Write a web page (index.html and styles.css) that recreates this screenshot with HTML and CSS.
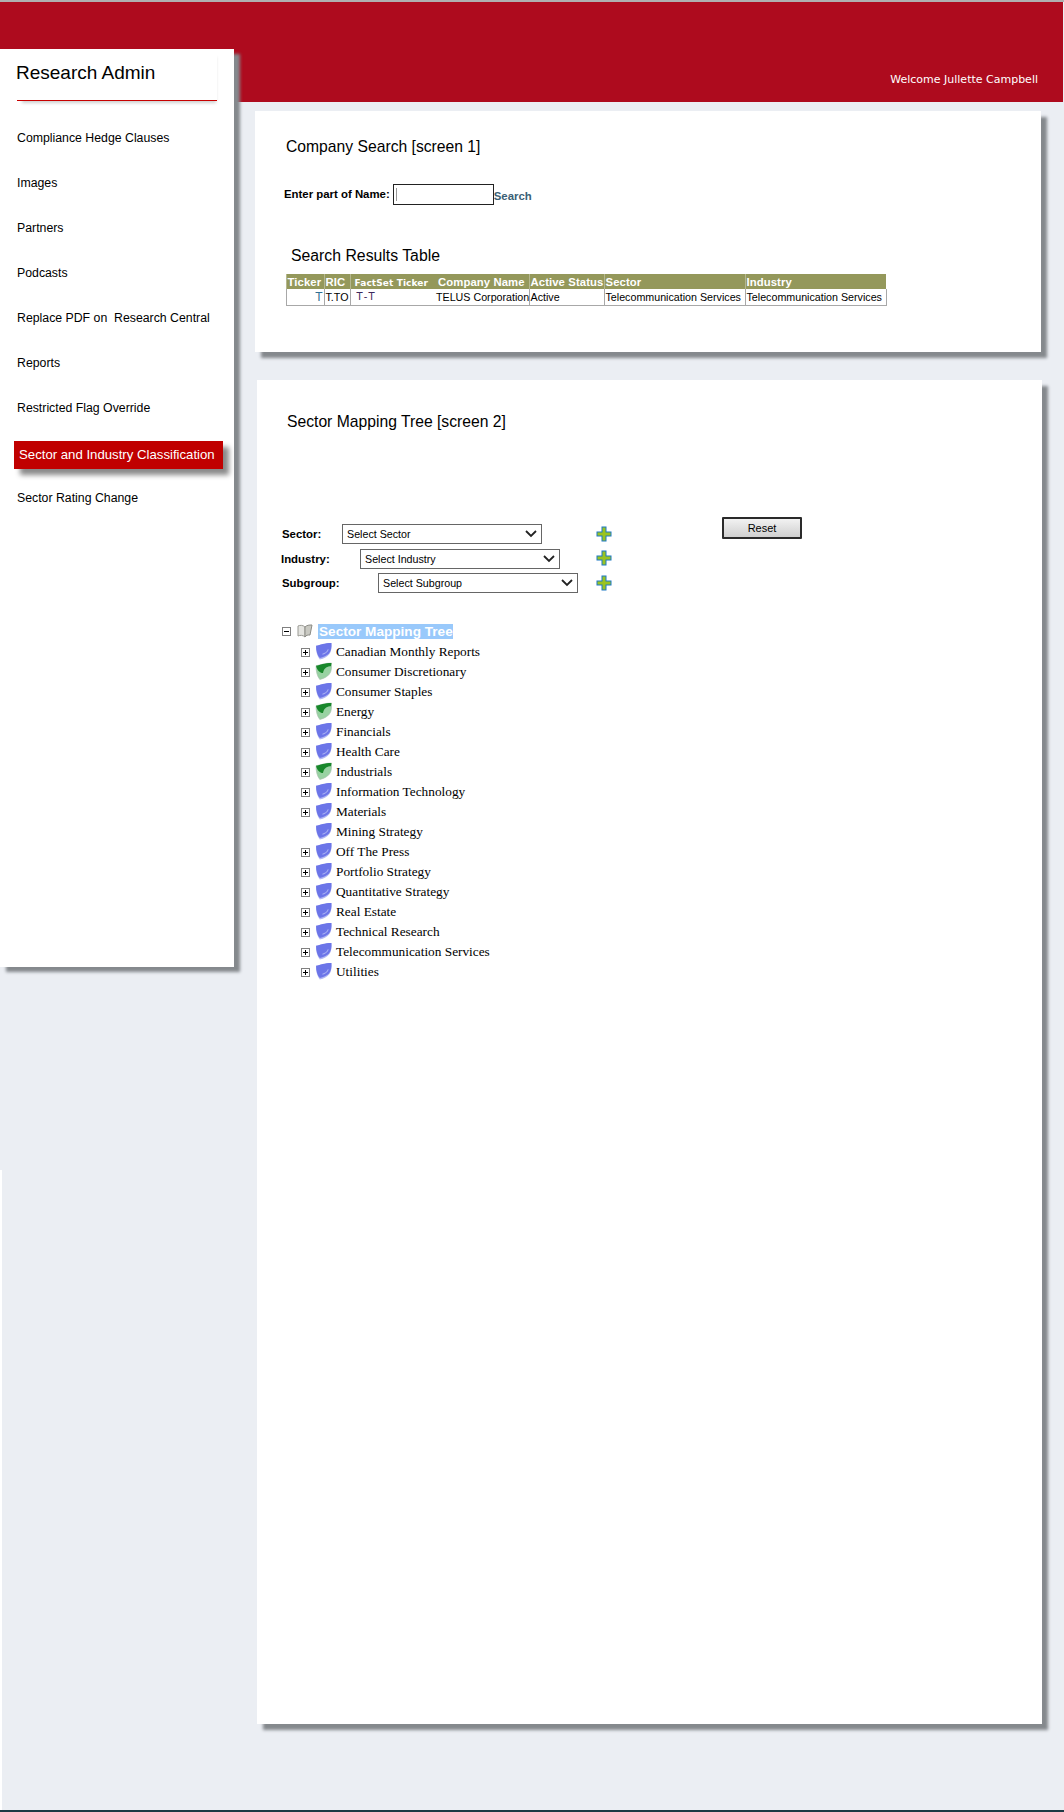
FILE: index.html
```html
<!DOCTYPE html>
<html lang="en">
<head>
    <meta charset="UTF-8">
    <meta name="viewport" content="width=device-width, initial-scale=1.0">
    <title>Research Admin</title>
    <link rel="stylesheet" href="styles.css">
</head>
<body>

<svg class="icon-defs" width="0" height="0">
    <defs>
        <symbol id="plus" viewBox="0 0 16 16">
            <path d="M5.5 .5h5v5h5v5h-5v5h-5v-5h-5v-5h5z" fill="#1c78c4"/>
            <path d="M6.5 1.5h3v5h5v3h-5v5h-3v-5h-5v-3h5z" fill="#9ac320"/>
        </symbol>
        <symbol id="shield-blue" viewBox="0 0 16 17">
            <path d="M1 3.500C5 3 9 1 15.500 1c.4 4.500 0 8-2 10.500-2 2.500-5 4-9 5C2 13.500.8 8.500 1 3.500z" fill="#b4baf3"/>
            <path d="M1 3.500C5 3 9 1 15.500 1c.2 4-.2 7.500-2.300 9.800C11 13 8 14.300 4.500 15.200 2.200 12.500.8 8 1 3.500z" fill="#6c75e8"/>
            <path d="M7 11.500c2.500-.5 4.500-2 5.500-4.500" fill="none" stroke="#a9b0f3" stroke-width="1"/>
        </symbol>
        <symbol id="shield-green" viewBox="0 0 16 17">
            <path d="M1 3.500C5 3 9 1 15.500 1c.4 4.500 0 8-2 10.500-2 2.500-5 4-9 5C2 13.500.8 8.500 1 3.500z" fill="#98d2a2" stroke="#a9bfae" stroke-width=".6"/>
            <path d="M1 3.500C5 3 9 1 15.500 1l-.5 3c-3 0-6.500 1-7.500 6.500C4.500 10 1.800 8 1 3.500z" fill="#17872a"/>
        </symbol>
    </defs>
</svg>

<div class="page">
    <header class="topbar">
        <span class="welcome">Welcome Jullette Campbell</span>
    </header>

    <div class="columns">
        <nav class="sidebar">
            <div class="brand">Research Admin</div>
            <ul class="menu">
                <li>Compliance Hedge Clauses</li>
                <li>Images</li>
                <li>Partners</li>
                <li>Podcasts</li>
                <li>Replace PDF on&nbsp; Research Central</li>
                <li>Reports</li>
                <li>Restricted Flag Override</li>
                <li class="active">Sector and Industry Classification</li>
                <li>Sector Rating Change</li>
            </ul>
        </nav>

        <main class="content">
            <section class="card card-search">
                <h2 class="card-title">Company Search [screen 1]</h2>
                <div class="search-row">
                    <label class="search-label">Enter part of Name:</label>
                    <span class="search-input"><span class="caret"></span></span>
                    <a class="search-link">Search</a>
                </div>
                <h2 class="results-title">Search Results Table</h2>
                <table class="results">
                    <thead>
                        <tr>
                            <th class="col-ticker">Ticker</th>
                            <th class="col-ric">RIC</th>
                            <th class="col-factset"><span class="factset-head">FactSet Ticker</span></th>
                            <th class="col-name">Company Name</th>
                            <th class="col-status">Active Status</th>
                            <th class="col-sector">Sector</th>
                            <th class="col-industry">Industry</th>
                        </tr>
                    </thead>
                    <tbody>
                        <tr>
                            <td class="cell-ticker">T</td>
                            <td>T.TO</td>
                            <td class="cell-factset">T-T</td>
                            <td class="cell-name">TELUS Corporation</td>
                            <td>Active</td>
                            <td>Telecommunication Services</td>
                            <td>Telecommunication Services</td>
                        </tr>
                    </tbody>
                </table>
            </section>

            <section class="card card-tree">
                <h2 class="card-title">Sector Mapping Tree [screen 2]</h2>

                <div class="filters">
                    <div class="filter-list">
                        <div class="filter filter-sector">
                            <label>Sector:</label>
                            <span class="select">Select Sector
                                <svg class="chevron" viewBox="0 0 12 8"><path d="M1 1l5 5 5-5" fill="none" stroke="#222" stroke-width="1.8"/></svg>
                            </span>
                            <svg class="add"><use href="#plus"/></svg>
                        </div>
                        <div class="filter filter-industry">
                            <label>Industry:</label>
                            <span class="select">Select Industry
                                <svg class="chevron" viewBox="0 0 12 8"><path d="M1 1l5 5 5-5" fill="none" stroke="#222" stroke-width="1.8"/></svg>
                            </span>
                            <svg class="add"><use href="#plus"/></svg>
                        </div>
                        <div class="filter filter-subgroup">
                            <label>Subgroup:</label>
                            <span class="select">Select Subgroup
                                <svg class="chevron" viewBox="0 0 12 8"><path d="M1 1l5 5 5-5" fill="none" stroke="#222" stroke-width="1.8"/></svg>
                            </span>
                            <svg class="add"><use href="#plus"/></svg>
                        </div>
                    </div>
                    <button class="reset">Reset</button>
                </div>

                <div class="tree">
                    <div class="tree-root">
                        <span class="toggle minus"></span>
                        <svg class="book" viewBox="0 0 16 14">
                            <path d="M1 2c2-1 5-1 7 1v10c-2-2-5-2-7-1z" fill="#e4e4e0" stroke="#9a9a94"/>
                            <path d="M8 3c2-2 4-2 7-2l-2 10c-2 0-4 0-5 2z" fill="#c9c9c2" stroke="#8c8c86"/>
                        </svg>
                        <span class="root-label">Sector Mapping Tree</span>
                    </div>
                    <ul class="tree-list">
                        <li><span class="toggle"></span><svg class="node"><use href="#shield-blue"/></svg>Canadian Monthly Reports</li>
                        <li><span class="toggle"></span><svg class="node"><use href="#shield-green"/></svg>Consumer Discretionary</li>
                        <li><span class="toggle"></span><svg class="node"><use href="#shield-blue"/></svg>Consumer Staples</li>
                        <li><span class="toggle"></span><svg class="node"><use href="#shield-green"/></svg>Energy</li>
                        <li><span class="toggle"></span><svg class="node"><use href="#shield-blue"/></svg>Financials</li>
                        <li><span class="toggle"></span><svg class="node"><use href="#shield-blue"/></svg>Health Care</li>
                        <li><span class="toggle"></span><svg class="node"><use href="#shield-green"/></svg>Industrials</li>
                        <li><span class="toggle"></span><svg class="node"><use href="#shield-blue"/></svg>Information Technology</li>
                        <li><span class="toggle"></span><svg class="node"><use href="#shield-blue"/></svg>Materials</li>
                        <li><span class="toggle none"></span><svg class="node"><use href="#shield-blue"/></svg>Mining Strategy</li>
                        <li><span class="toggle"></span><svg class="node"><use href="#shield-blue"/></svg>Off The Press</li>
                        <li><span class="toggle"></span><svg class="node"><use href="#shield-blue"/></svg>Portfolio Strategy</li>
                        <li><span class="toggle"></span><svg class="node"><use href="#shield-blue"/></svg>Quantitative Strategy</li>
                        <li><span class="toggle"></span><svg class="node"><use href="#shield-blue"/></svg>Real Estate</li>
                        <li><span class="toggle"></span><svg class="node"><use href="#shield-blue"/></svg>Technical Research</li>
                        <li><span class="toggle"></span><svg class="node"><use href="#shield-blue"/></svg>Telecommunication Services</li>
                        <li><span class="toggle"></span><svg class="node"><use href="#shield-blue"/></svg>Utilities</li>
                    </ul>
                </div>
            </section>
        </main>
    </div>
</div>

</body>
</html>
```

FILE: styles.css
```css
* {
    box-sizing: border-box;
}
body {
    margin: 0;
    background: #fff;
    font-family: 'Liberation Sans', Arial, sans-serif;
    color: #000;
}
.icon-defs {
    position: absolute;
}
.page {
    height: 1812px;
    background: linear-gradient(#fff, #fff) left bottom / 2px 640px no-repeat, #ebeef3;
    border-top: 2px solid #b0b0b0;
    border-bottom: 2px solid #1d3a44;
    overflow: hidden;
}

/* top band */
.topbar {
    height: 100px;
    margin-right: 1px;
    padding: 0 25px 15px 0;
    display: flex;
    justify-content: flex-end;
    align-items: flex-end;
    background: #ae0b1e;
}
.welcome {
    color: #fff;
    font-family: 'DejaVu Sans', sans-serif;
    font-size: 11px;
    line-height: 14px;
}

.columns {
    display: flex;
    align-items: flex-start;
    margin-top: -53px;
}

/* left menu */
.sidebar {
    width: 234px;
    height: 918px;
    flex: none;
    padding-left: 17px;
    background: #fff;
    box-shadow: 6px 5px 3px #85898d;
}
.brand {
    width: 200px;
    height: 52px;
    padding-top: 13px;
    text-indent: -1px;
    font-size: 19px;
    line-height: 22px;
    border-bottom: 1px solid #c80000;
    box-shadow: 2px 5px 3px -3px #cfcfcf;
}
.menu {
    margin: 27px 0 0;
    padding: 0;
    list-style: none;
    font-size: 12.3px;
}
.menu li {
    height: 45px;
    line-height: 20px;
    white-space: nowrap;
}
.menu .active {
    width: 209px;
    height: 28px;
    margin: -2px 0 19px -3px;
    padding-left: 5px;
    font-size: 13.2px;
    line-height: 28px;
    color: #fff;
    background: #c00000;
    box-shadow: 6px 6px 5px #8a8a8a;
}

/* right side */
.content {
    margin-left: 21px;
    padding-top: 62px;
}
.card {
    background: #fff;
    box-shadow: 6px 6px 3px #85898d;
}
.card-search {
    width: 786px;
    height: 241px;
    padding: 26px 0 0 31px;
}
.card-tree {
    width: 785px;
    height: 1344px;
    margin: 28px 0 0 2px;
    padding: 32px 0 0 30px;
}
.card-title {
    margin: 0;
    font-size: 15.7px;
    font-weight: normal;
    line-height: 20px;
}

.search-row {
    display: flex;
    align-items: center;
    margin: 26px 0 0 -2px;
    font-size: 11.4px;
}
.search-label {
    font-weight: bold;
    margin-right: 3px;
}
.search-input {
    width: 101px;
    height: 21px;
    margin-top: 1px;
    padding: 3px 2px;
    border: 1px solid #222;
}
.caret {
    display: block;
    width: 1px;
    height: 13px;
    background: #999;
}
.search-link {
    margin-top: 4px;
    font-weight: bold;
    color: #3b6176;
}
.results-title {
    margin: 41px 0 0 5px;
    font-size: 15.8px;
    font-weight: normal;
    line-height: 20px;
}
.results {
    width: 600px;
    margin: 8px 0 0 -0.5px;
    border-collapse: collapse;
    table-layout: fixed;
    font-size: 10.7px;
}
.results th {
    height: 15px;
    padding: 0 1px;
    background: #94985b;
    color: #fff;
    text-align: left;
    font-size: 11.3px;
    letter-spacing: .1px;
    white-space: nowrap;
    overflow: hidden;
    border-left: 1px solid #b5b78e;
}
.results td {
    height: 16px;
    padding: 0 1px;
    white-space: nowrap;
    overflow: hidden;
    border: 1px solid #a8a8a8;
    border-top: none;
}
.col-ticker { width: 38px; }
.col-ric { width: 26px; }
.col-factset { width: 85px; }
.col-name { width: 94px; }
.col-status { width: 75px; }
.col-sector { width: 141px; }
.col-industry { width: 141px; }
.results th.col-factset {
    padding-left: 4px;
}
.factset-head {
    font-family: 'DejaVu Sans', sans-serif;
    font-size: 9px;
}
.results th.col-name {
    border-left: none;
    padding-left: 3px;
}
.results td.cell-ticker {
    text-align: right;
    font-size: 12px;
    color: #2f6f93;
}
.results td.cell-factset {
    padding-left: 6px;
    font-family: 'DejaVu Sans', sans-serif;
    font-size: 10px;
    color: #3c2a5c;
    letter-spacing: 2px;
    border-right: none;
}
.results td.cell-name {
    padding-left: 1px;
    border-left: none;
}

/* sector form */
.filters {
    display: flex;
    align-items: flex-start;
    margin: 92px 0 0 -5px;
}
.filter-list {
    width: 441px;
}
.filter {
    display: flex;
    align-items: center;
    height: 20px;
}
.filter label {
    font-weight: bold;
    font-size: 11.4px;
}
.filter-sector label { width: 60px; }
.filter-industry label { width: 79px; margin-left: -1px; }
.filter-subgroup label { width: 96px; }
.filter-industry { margin-top: 5px; }
.filter-subgroup { margin-top: 4px; }
.select {
    position: relative;
    width: 200px;
    height: 20px;
    padding-left: 4px;
    border: 1px solid #666;
    line-height: 18px;
    font-size: 10.7px;
    background: #fff;
}
.chevron {
    position: absolute;
    right: 4px;
    top: 5px;
    width: 12px;
    height: 8px;
}
.filter .add {
    width: 16px;
    height: 16px;
}
.filter-sector .add { margin-left: 54px; }
.filter-industry .add { margin: -2px 0 0 36px; }
.filter-subgroup .add { margin-left: 18px; }
.reset {
    width: 80px;
    height: 22px;
    margin: -7px 0 0 -1px;
    padding: 0;
    font: 11px 'Liberation Sans', Arial, sans-serif;
    background: linear-gradient(#f2f2f2, #cfcfcf);
    border: 2px solid #2a2a2a;
    border-radius: 1px;
}

/* tree */
.tree {
    margin: 28px 0 0 -5px;
    font-family: 'Liberation Serif', 'Times New Roman', serif;
    font-size: 13.3px;
}
.tree-root,
.tree-list li {
    display: flex;
    align-items: center;
    height: 20px;
}
.toggle {
    position: relative;
    width: 9px;
    height: 9px;
    flex: none;
    margin-right: 6px;
    border: 1px solid #808080;
    background: #fff;
}
.toggle::before,
.toggle::after {
    content: '';
    position: absolute;
    background: #000;
}
.toggle::before {
    left: 1px;
    top: 3px;
    width: 5px;
    height: 1px;
}
.toggle::after {
    left: 3px;
    top: 1px;
    width: 1px;
    height: 5px;
}
.toggle.minus::after {
    display: none;
}
.toggle.none {
    visibility: hidden;
}
.book {
    width: 16px;
    height: 14px;
    flex: none;
    margin-right: 5px;
}
.root-label {
    padding-left: 1px;
    font-family: 'Liberation Sans', Arial, sans-serif;
    font-size: 13.6px;
    font-weight: bold;
    line-height: 15px;
    color: #fff;
    background: #99c9fb;
}
.tree-list {
    margin: 1px 0 0;
    padding: 0 0 0 19px;
    list-style: none;
    white-space: nowrap;
}
.node {
    width: 17px;
    height: 18px;
    flex: none;
    margin: -3px 4px 0 -1px;
}
```
